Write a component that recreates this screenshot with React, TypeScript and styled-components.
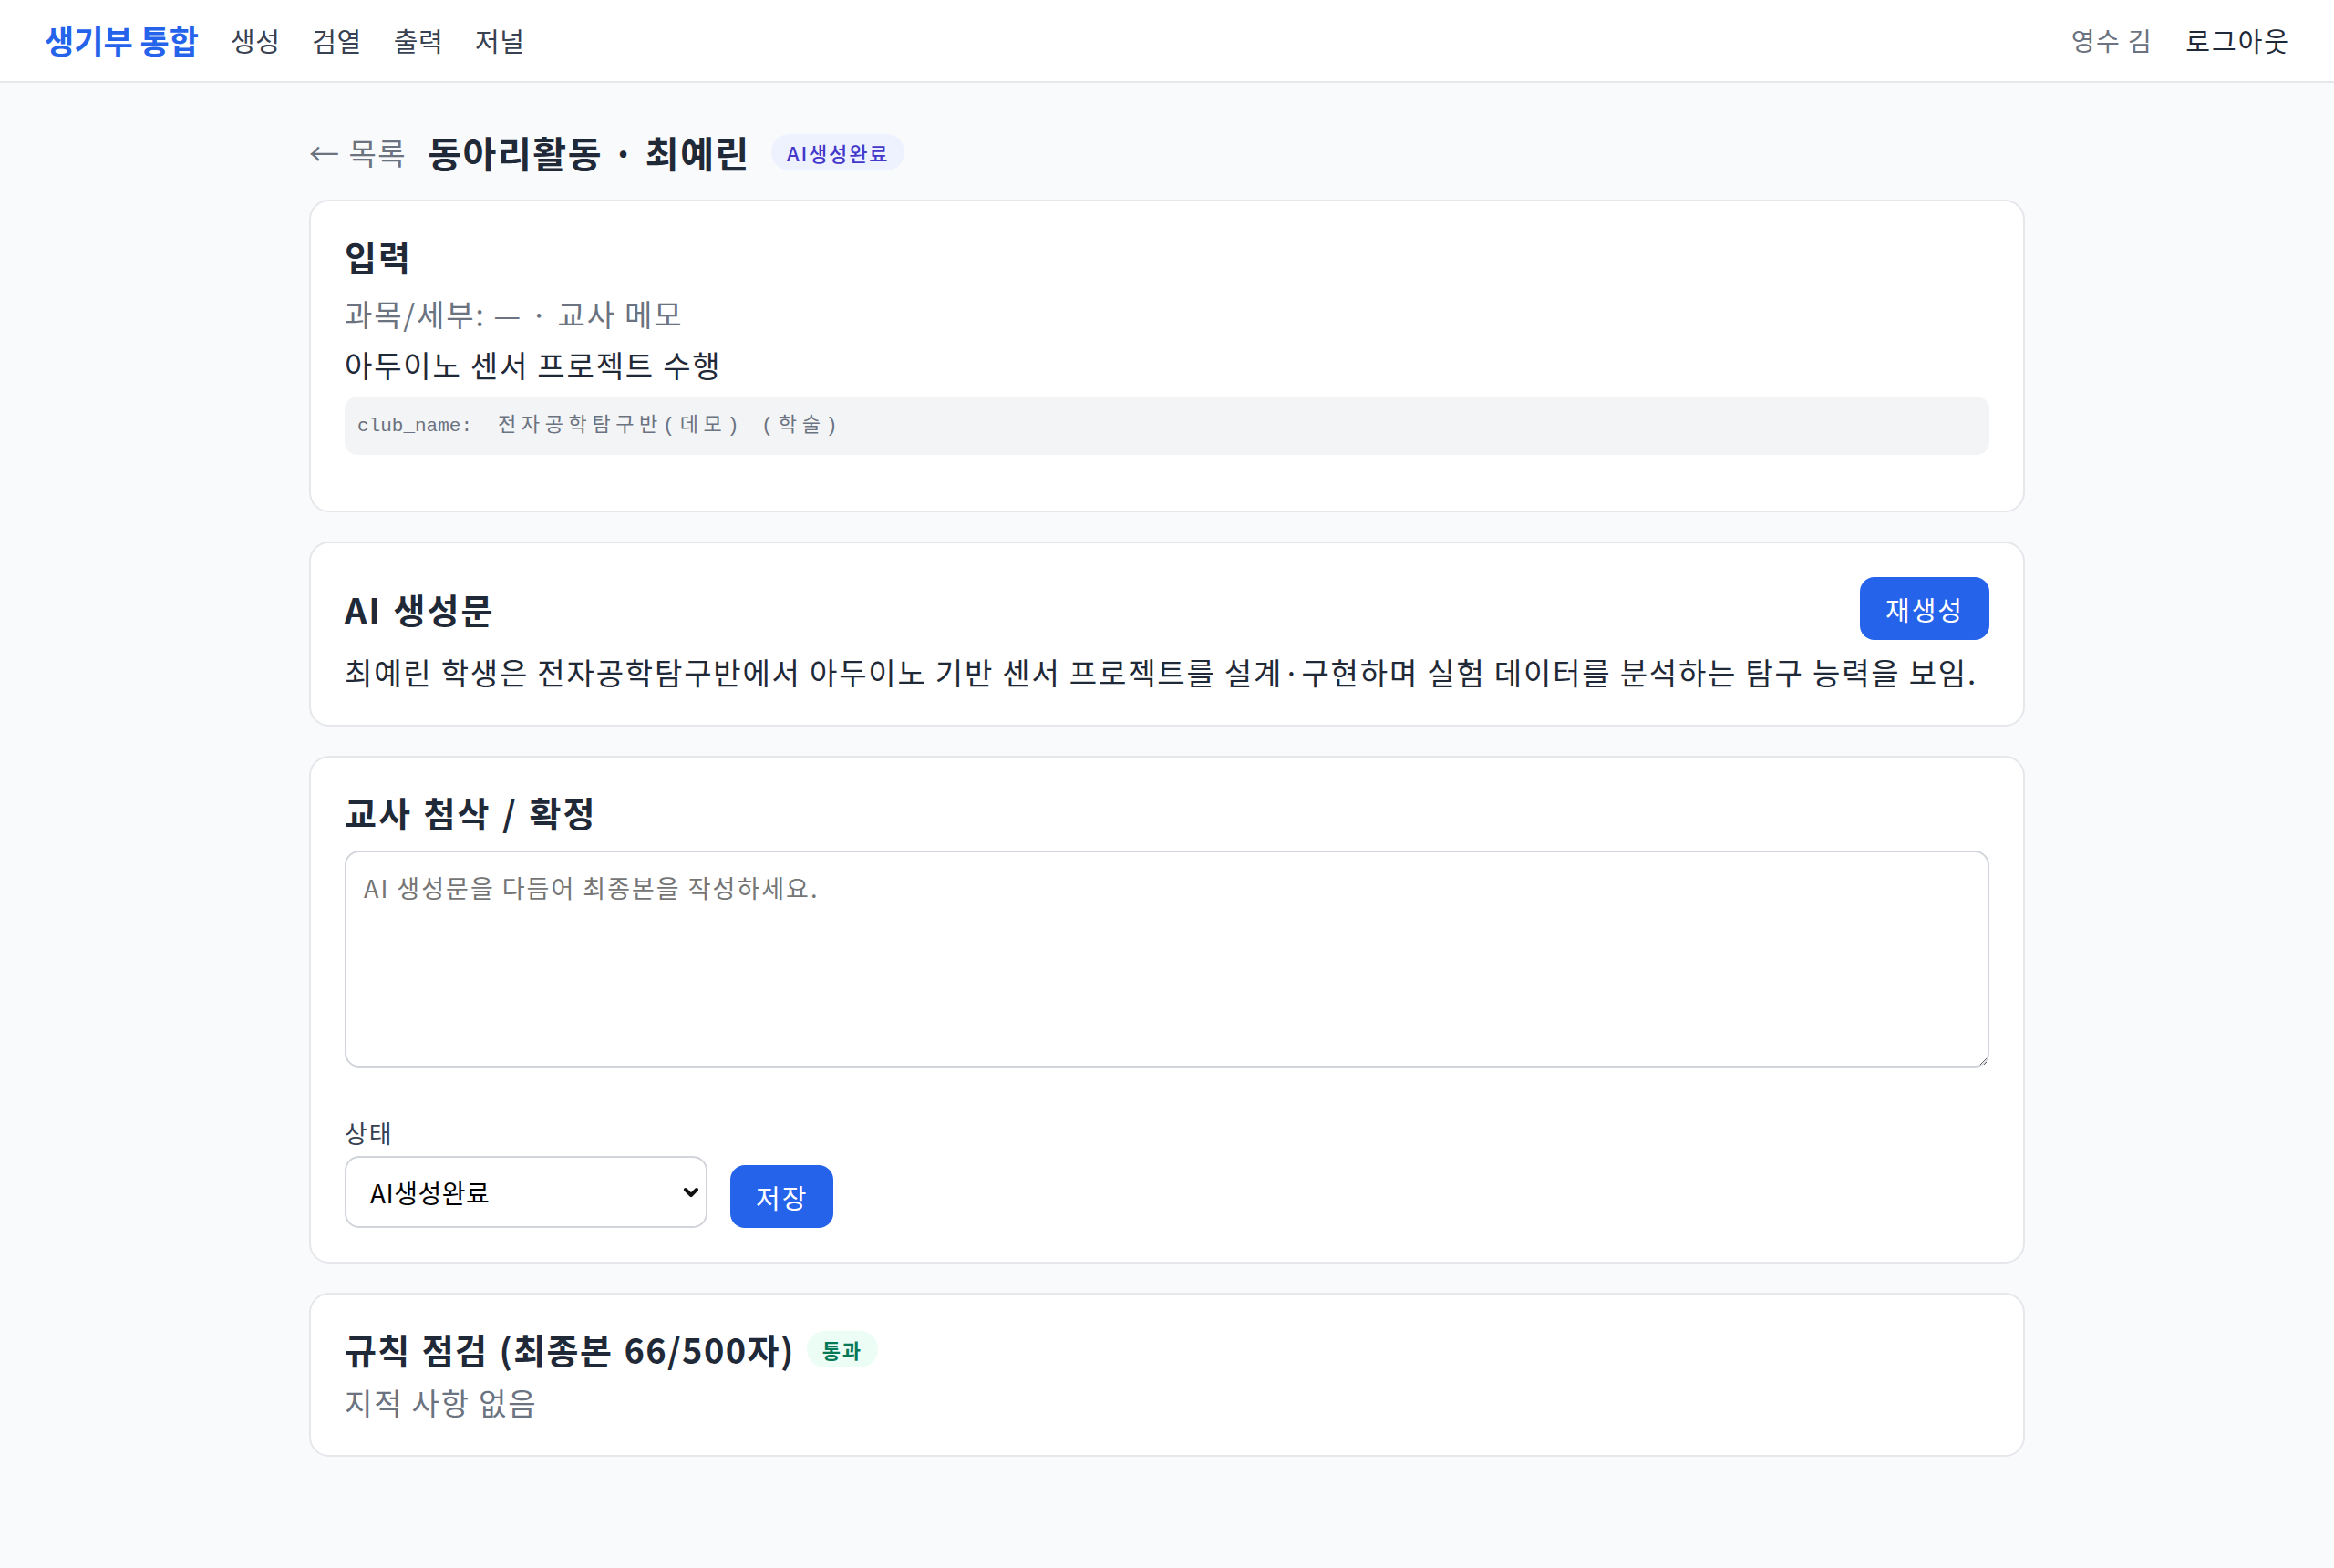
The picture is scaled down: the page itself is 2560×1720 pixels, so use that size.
import React, { useState } from 'react';
import styled, { createGlobalStyle } from 'styled-components';
import { ChevronDown } from 'lucide-react';

const GlobalStyle = createGlobalStyle`
  * { box-sizing: border-box; }
  html, body {
    margin: 0;
    padding: 0;
    background: #f9fafb;
    color: #1f2937;
    font-family: "Noto Sans CJK KR", "Noto Sans", sans-serif;
  }
  #root { min-height: 1720px; background: #f9fafb; }
`

const statusOptions = ['초안', 'AI생성완료', '교사검토', '확정']

export default function App() {
  const [status, setStatus] = useState('AI생성완료')
  const [finalText, setFinalText] = useState('')

  return (
    <>
      <GlobalStyle />
      <TopBar>
        <NavLeft>
          <Brand href="#">생기부 통합</Brand>
          <NavLink href="#">생성</NavLink>
          <NavLink href="#">검열</NavLink>
          <NavLink href="#">출력</NavLink>
          <NavLink href="#">저널</NavLink>
        </NavLeft>
        <NavRight>
          <UserName>영수 김</UserName>
          <NavLink as="button" $strong>로그아웃</NavLink>
        </NavRight>
      </TopBar>

      <Main>
        <TitleRow>
          <BackLink href="#">← 목록</BackLink>
          <PageTitle>동아리활동 · 최예린</PageTitle>
          <Badge tone="indigo">AI생성완료</Badge>
        </TitleRow>

        <Card>
          <CardTitle>입력</CardTitle>
          <Muted>과목/세부: — · 교사 메모</Muted>
          <BodyText>아두이노 센서 프로젝트 수행</BodyText>
          <CodeBlock>
            <CodeKey>club_name:</CodeKey>
            <CodeValue>전자공학탐구반(데모) (학술)</CodeValue>
          </CodeBlock>
        </Card>

        <Card>
          <CardHeader>
            <CardTitle>AI 생성문</CardTitle>
            <PrimaryButton>재생성</PrimaryButton>
          </CardHeader>
          <BodyText>
            최예린 학생은 전자공학탐구반에서 아두이노 기반 센서 프로젝트를 설계·구현하며 실험 데이터를 분석하는 탐구 능력을 보임.
          </BodyText>
        </Card>

        <Card>
          <CardTitle>교사 첨삭 / 확정</CardTitle>
          <TextArea
            rows={5}
            placeholder="AI 생성문을 다듬어 최종본을 작성하세요."
            value={finalText}
            onChange={e => setFinalText(e.target.value)}
          />
          <Controls>
            <Field>
              <Label>상태</Label>
              <SelectWrap>
                <Select value={status} onChange={e => setStatus(e.target.value)}>
                  {statusOptions.map(option => (
                    <option key={option} value={option}>{option}</option>
                  ))}
                </Select>
                <SelectIcon>
                  <ChevronDown size={24} strokeWidth={4} />
                </SelectIcon>
              </SelectWrap>
            </Field>
            <PrimaryButton>저장</PrimaryButton>
          </Controls>
        </Card>

        <Card>
          <CardHeader $start>
            <CardTitle $tight>규칙 점검 (최종본 {finalText.length || 66}/500자)</CardTitle>
            <Badge tone="green">통과</Badge>
          </CardHeader>
          <Muted>지적 사항 없음</Muted>
        </Card>
      </Main>
    </>
  );
}

const TopBar = styled.header`
  display: flex;
  justify-content: space-between;
  align-items: center;
  height: 91px;
  padding: 0 48px 2px 49px;
  background: #ffffff;
  border-bottom: 2px solid #e5e7eb;
`

const NavLeft = styled.nav`
  display: flex;
  align-items: center;
  gap: 35px;
`

const NavRight = styled.div`
  display: flex;
  align-items: center;
  gap: 36px;
`

const Brand = styled.a`
  font-size: 35px;
  font-weight: 700;
  color: #2563eb;
  text-decoration: none;
`

const NavLink = styled.a<{ $strong?: boolean }>`
  font-size: 29px;
  letter-spacing: ${p => (p.$strong ? '2px' : '0.5px')};
  color: ${p => (p.$strong ? '#1f2937' : '#374151')};
  text-decoration: none;
  background: none;
  border: none;
  padding: 0;
  font-family: inherit;
  cursor: pointer;
`

const UserName = styled.span`
  font-size: 28px;
  letter-spacing: 1.5px;
  color: #6b7280;
`

const Main = styled.main`
  max-width: 1882px;
  margin: 0 auto;
  padding: 53px 0 80px;
  display: flex;
  flex-direction: column;
  gap: 32px;
`

const TitleRow = styled.div`
  display: flex;
  align-items: center;
  height: 46px;
  margin-bottom: -3px;
`

const BackLink = styled.a`
  font-size: 33px;
  letter-spacing: 1.5px;
  color: #6b7280;
  text-decoration: none;
  margin-right: 23px;
`

const PageTitle = styled.h1`
  margin: 0 23px 0 0;
  font-size: 40px;
  line-height: 46px;
  letter-spacing: 1.6px;
  font-weight: 700;
  color: #1f2937;
`

const Badge = styled.span<{ tone: 'indigo' | 'green' }>`
  display: inline-flex;
  align-items: center;
  height: 40px;
  padding: 0 17px;
  border-radius: 999px;
  font-size: 22px;
  letter-spacing: 1.8px;
  font-weight: ${p => (p.tone === 'green' ? 600 : 500)};
  color: ${p => (p.tone === 'green' ? '#047857' : '#4338ca')};
  background: ${p => (p.tone === 'green' ? '#ecfdf5' : '#eef2ff')};
`

const Card = styled.section`
  display: flex;
  flex-direction: column;
  gap: 14px;
  padding: 37px;
  background: #ffffff;
  border: 2px solid #e5e7eb;
  border-radius: 22px;
`

const CardHeader = styled.div<{ $start?: boolean }>`
  display: flex;
  align-items: center;
  justify-content: ${p => (p.$start ? 'flex-start' : 'space-between')};
  gap: ${p => (p.$start ? '13px' : '18px')};
`

const CardTitle = styled.h2<{ $tight?: boolean }>`
  margin: 0 0 5px;
  font-size: 38px;
  line-height: 46px;
  letter-spacing: ${p => (p.$tight ? '1.4px' : '2px')};
  word-spacing: 2px;
  font-weight: 700;
  color: #1f2937;

  ${CardHeader} & {
    margin-bottom: 0;
  }
`

const BodyText = styled.p`
  margin: 0;
  font-size: 33px;
  line-height: 42px;
  letter-spacing: 1.8px;
  color: #1f2937;
`

const Muted = styled(BodyText)`
  color: #6b7280;
`

const CodeBlock = styled.pre`
  margin: 0 0 24px;
  padding: 14px 14px;
  background: #f3f4f6;
  border-radius: 14px;
  font-size: 22px;
  line-height: 34px;
  color: #6b7280;
  white-space: pre-wrap;
`

const CodeKey = styled.span`
  font-family: "Liberation Mono", monospace;
  font-size: 21px;
`

const CodeValue = styled.span`
  margin-left: 28px;
  font-family: "Liberation Mono", "Noto Sans CJK KR", monospace;
  letter-spacing: 5.6px;
`

const PrimaryButton = styled.button`
  height: 69px;
  padding: 0 28px;
  border: none;
  border-radius: 16px;
  background: #2563eb;
  color: #ffffff;
  font-family: inherit;
  font-size: 29px;
  letter-spacing: 2px;
  cursor: pointer;
`

const TextArea = styled.textarea`
  display: block;
  width: 100%;
  height: 238px;
  padding: 19px;
  border: 2px solid #d1d5db;
  border-radius: 16px;
  font-family: inherit;
  font-size: 27px;
  line-height: 40px;
  letter-spacing: 2px;
  color: #1f2937;
  background: #ffffff;
  outline: none;

  &::placeholder {
    color: #757575;
  }
`

const Controls = styled.div`
  display: flex;
  align-items: flex-end;
  gap: 25px;
  margin-top: 39px;
`

const Field = styled.div`
  display: flex;
  flex-direction: column;
  gap: 6px;
`

const Label = styled.label`
  font-size: 27px;
  line-height: 38px;
  letter-spacing: 2px;
  color: #374151;
`

const SelectWrap = styled.div`
  position: relative;
  width: 398px;
`

const Select = styled.select`
  appearance: none;
  width: 100%;
  height: 79px;
  padding: 0 56px 0 26px;
  border: 2px solid #d1d5db;
  border-radius: 16px;
  background: #ffffff;
  font-family: inherit;
  font-size: 28px;
  letter-spacing: 0.5px;
  color: #000000;
`

const SelectIcon = styled.span`
  position: absolute;
  right: 6px;
  top: 50%;
  transform: translateY(-50%);
  display: flex;
  color: #111111;
  pointer-events: none;
`
